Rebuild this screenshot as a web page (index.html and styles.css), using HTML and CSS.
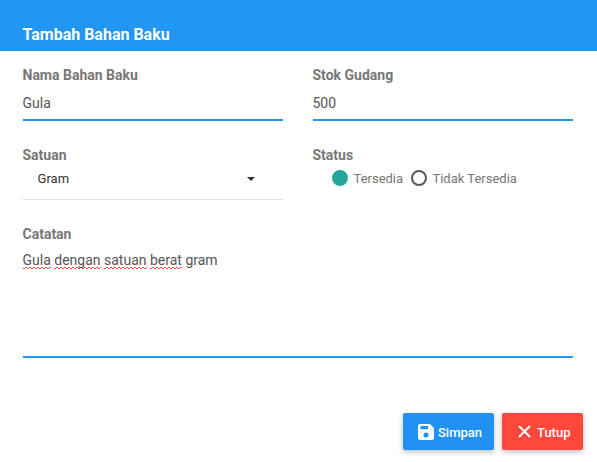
FILE: index.html
```html
<!DOCTYPE html>
<html lang="id">
<head>
<meta charset="utf-8">
<title>Tambah Bahan Baku</title>
<link rel="stylesheet" href="styles.css">
</head>
<body>
<header class="header"><h1 class="title">Tambah Bahan Baku</h1></header>
<main class="form">
  <div class="field">
    <div class="label">Nama Bahan Baku</div>
    <div class="input">Gula</div>
  </div>
  <div class="field">
    <div class="label">Stok Gudang</div>
    <div class="input">500</div>
  </div>
  <div class="field">
    <div class="label">Satuan</div>
    <div class="select"><span>Gram</span><span class="caret"></span></div>
  </div>
  <div class="field">
    <div class="label">Status</div>
    <div class="radios">
      <span class="radio radio-on"></span><span class="option">Tersedia</span>
      <span class="radio"></span><span class="option">Tidak Tersedia</span>
    </div>
  </div>
  <div class="field wide">
    <div class="label">Catatan</div>
    <div class="textarea"><span class="typo">Gula</span> <span class="typo">dengan</span> <span class="typo">satuan</span> <span class="typo">berat</span> gram</div>
  </div>
</main>
<footer class="actions">
  <button class="btn save"><svg width="16" height="16" viewBox="0 0 16 16"><path fill="#fff" fill-rule="evenodd" d="M2 0H12L16 4V14a2 2 0 0 1-2 2H2a2 2 0 0 1-2-2V2a2 2 0 0 1 2-2ZM2.4 2V5.2H10V2ZM8 8.6a2.5 2.5 0 1 0 0 5a2.5 2.5 0 1 0 0-5Z"/></svg><span>Simpan</span></button>
  <button class="btn close"><svg width="13" height="13" viewBox="0 0 13 13"><path d="M1 1L12 12M12 1L1 12" stroke="#fff" stroke-width="1.9" fill="none"/></svg><span>Tutup</span></button>
</footer>
</body>
</html>
```

FILE: styles.css
```css
* { box-sizing: border-box; }
body {
  margin: 0;
  height: 462px;
  overflow: hidden;
  background: #fff;
  font-family: Roboto, sans-serif;
  font-size: 14px;
  color: #555;
}
.header { height: 51px; padding: 25px 22.5px 0; background: #2196f3; }
.title { margin: 0; font-size: 16px; line-height: 20px; font-weight: 700; color: #fff; }
.form {
  display: grid;
  grid-template-columns: 260px 260px;
  grid-template-rows: 80px 79px 134px;
  column-gap: 30px;
  padding: 14px 23px 0;
}
.wide { grid-column: 1 / 3; width: 550px; }
.label { height: 20px; line-height: 20px; font-weight: 700; color: #777; text-indent: -.5px; }
.input { height: 36px; line-height: 36px; border-bottom: 2px solid #2196f3; text-indent: -.5px; }
.select {
  display: flex;
  align-items: center;
  justify-content: space-between;
  height: 35px;
  padding: 0 28px 7px 14.6px;
  border-bottom: 1px solid #ddd;
  font-size: 13px;
  color: #333;
}
.caret { border: 4px solid transparent; border-top-color: #333; border-bottom: 0; }
.radios { display: flex; align-items: center; height: 26px; padding-left: 19px; font-size: 13px; color: #777; }
.radio { width: 16px; height: 16px; border: 2px solid #5a5a5a; border-radius: 50%; margin-right: 5.5px; }
.radio-on { border-color: #26a69a; background: #26a69a; }
.option { margin-right: 7.8px; }
.textarea { height: 114px; padding-top: 6px; line-height: 20px; border-bottom: 2px solid #2196f3; text-indent: -.5px; }
.typo {
  padding-bottom: 1px;
  background: url("data:image/svg+xml,%3Csvg xmlns='http://www.w3.org/2000/svg' width='4' height='2'%3E%3Cpath d='M-1 0L1 2L3 0L5 2' fill='none' stroke='%23f33' stroke-width='.9'/%3E%3C/svg%3E") left bottom repeat-x;
}
.actions { display: flex; justify-content: flex-end; gap: 8px; padding: 55px 14px 0; }
.btn {
  display: flex;
  align-items: center;
  height: 37px;
  padding: 0 12px 0 14.5px;
  border: 0;
  border-radius: 2px;
  font: 500 13px/20px Roboto, sans-serif;
  color: #fff;
  box-shadow: 0 2px 5px rgba(0, 0, 0, .16), 0 2px 6px rgba(0, 0, 0, .12);
}
.save { width: 91px; gap: 4.5px; background: #2091f2; }
.close { width: 81px; padding-left: 16px; gap: 6px; background: #ff483b; }
.btn span { padding-top: 2px; }
.btn svg { flex: none; }
```
